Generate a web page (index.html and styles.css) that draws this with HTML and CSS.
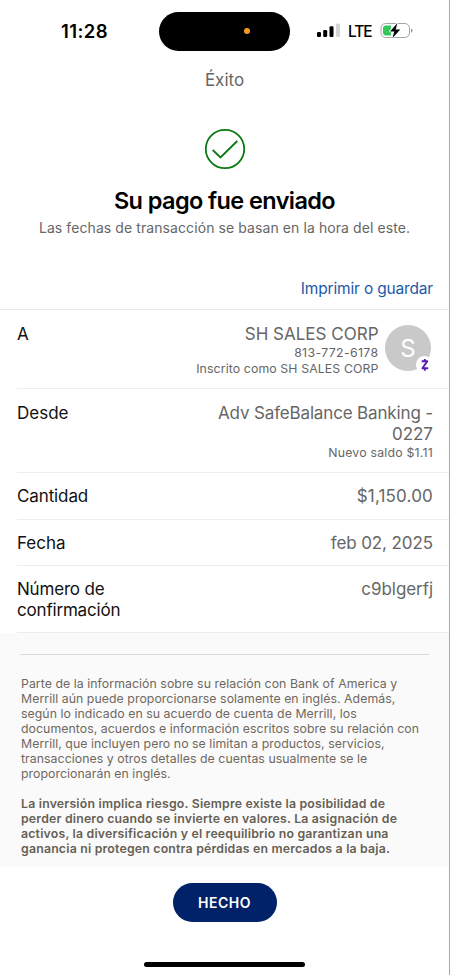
FILE: index.html
```html
<!DOCTYPE html>
<html lang="es">
<head>
<meta charset="utf-8">
<title>Éxito</title>
<link rel="stylesheet" href="styles.css">
</head>
<body>
<div class="screen">
  <header class="status">
    <span class="time">11:28</span>
    <div class="island"><i class="dot"></i></div>
    <div class="indicators">
      <svg class="signal" width="24" height="16" viewBox="0 0 24 16">
        <rect x="0" y="9" width="4" height="5" rx="1.2"/>
        <rect x="6.2" y="7" width="4" height="7" rx="1.2"/>
        <rect x="12.5" y="3.2" width="4" height="10.8" rx="1.2"/>
        <rect x="19" y="0.5" width="4" height="13.5" rx="1.2" fill="#d4d4d4"/>
      </svg>
      <span class="lte">LTE</span>
      <svg class="battery" width="34" height="18" viewBox="0 0 34 18">
        <rect x="1" y="1.500" width="28.5" height="14" rx="4.6" fill="#fff" stroke="#a5a5a5"/>
        <path d="M6 3.500H11V13.500H6Q3 13.500 3 10.500V6.500Q3 3.500 6 3.500Z" fill="#34c759"/>
        <path d="M31 6.500V10.700Q32.600 10.100 32.600 8.600T31 6.500Z" fill="#999"/>
        <path d="M17.500 1L10 9.400H14.400L12.300 16.300L20.300 7.600H15.600Z" fill="#000" stroke="#fff" stroke-width="1.600" paint-order="stroke" stroke-linejoin="round"/>
      </svg>
    </div>
  </header>
  <h1 class="page-title">Éxito</h1>
  <svg class="check" width="42" height="42" viewBox="0 0 42 42" fill="none" stroke="#0b7a12">
    <circle cx="21" cy="21" r="19.200" stroke-width="1.800"/>
    <path d="M8.700 22L16.500 29.500L33.300 13" stroke-width="1.900"/>
  </svg>
  <h2 class="headline">Su pago fue enviado</h2>
  <p class="note">Las fechas de transacción se basan en la hora del este.</p>
  <a class="save">Imprimir o guardar</a>
  <main class="details">
    <section class="row row-to">
      <span class="label">A</span>
      <div class="value">
        <span class="payee">SH SALES CORP</span>
        <small class="phone">813-772-6178</small>
        <small class="enrolled">Inscrito como SH SALES CORP</small>
      </div>
      <div class="avatar">S
        <span class="badge"><svg width="10" height="14" viewBox="0 0 10 14" fill="none" stroke="#5b18b5" stroke-width="1.900"><path d="M1.700 3.200H7.300L2.400 10.300H8.200M4.800 .9V3.200M4.800 10.300V12.800" stroke-linejoin="round"/></svg></span>
      </div>
    </section>
    <section class="row row-from">
      <span class="label desde">Desde</span>
      <div class="value"><span class="account">Adv SafeBalance Banking -</span><span class="digits">0227</span><small class="balance">Nuevo saldo $1.11</small></div>
    </section>
    <section class="row row-amount"><span class="label cantidad">Cantidad</span><div class="value"><span class="amount">$1,150.00</span></div></section>
    <section class="row row-date"><span class="label fecha">Fecha</span><div class="value"><span class="date">feb 02, 2025</span></div></section>
    <section class="row row-number"><span class="label numero">Número de<br>confirmación</span><div class="value"><span class="code">c9blgerfj</span></div></section>
  </main>
  <section class="legal">
    <p>Parte de la información sobre su relación con Bank of America y<br>Merrill aún puede proporcionarse solamente en inglés. Además,<br>según lo indicado en su acuerdo de cuenta de Merrill, los<br>documentos, acuerdos e información escritos sobre su relación con<br>Merrill, que incluyen pero no se limitan a productos, servicios,<br>transacciones y otros detalles de cuentas usualmente se le<br>proporcionarán en inglés.</p>
    <p class="risk">La inversión implica riesgo. Siempre existe la posibilidad de<br>perder dinero cuando se invierte en valores. La asignación de<br>activos, la diversificación y el reequilibrio no garantizan una<br>ganancia ni protegen contra pérdidas en mercados a la baja.</p>
  </section>
  <footer class="footer">
    <button class="done">HECHO</button>
    <div class="home"></div>
  </footer>
</div>
</body>
</html>
```
FILE: styles.css
```css
* { box-sizing: border-box; }
body { margin: 0; background: #fff; font-family: Inter, "Liberation Sans", sans-serif; color: #111; }
.screen { width: 450px; height: 975px; display: flex; flex-direction: column; align-items: center; border-right: 1px solid #a9a9a9; overflow: hidden; }
.status { width: 100%; height: 62px; flex: none; display: grid; grid-template-columns: 159px 131px 1fr; align-items: center; }
.time { padding-left: 61px; font-size: 18.500px; font-weight: 600; letter-spacing: .4px; color: #000; }
.island { height: 39px; border-radius: 20px; background: #000; display: flex; align-items: center; padding-left: 85px; }
.dot { width: 6px; height: 6px; border-radius: 50%; background: #f59a23; }
.indicators { display: flex; align-items: center; padding-left: 27px; }
.lte { margin-left: 7px; width: 32px; font-size: 15.500px; font-weight: 500; letter-spacing: -1.100px; color: #000; }
.page-title { margin: 8px 0 0; font-size: 17px; line-height: 20px; font-weight: 400; color: #666; }
.check { margin-top: 38px; flex: none; }
.headline { margin: 16px 0 0; font-size: 23.500px; line-height: 30px; font-weight: 600; letter-spacing: -.6px; color: #000; white-space: nowrap; }
.note { margin: 2px 0 0; font-size: 14px; line-height: 20px; letter-spacing: .085px; color: #666; white-space: nowrap; }
.save { align-self: flex-end; margin: 41px 16px 10px 0; font-size: 15.500px; line-height: 20px; letter-spacing: -.17px; color: #1c5aa6; white-space: nowrap; }
.details { width: 100%; border-top: 1px solid #e8e8e8; padding-left: 17px; flex: none; }
.row { display: flex; justify-content: space-between; border-bottom: 1px solid #ececec; padding: 13px 16px 0 0; font-size: 17px; line-height: 21px; white-space: nowrap; }
.value { display: flex; flex-direction: column; align-items: flex-end; color: #666; }
.value small { font-size: 12.300px; line-height: 16px; }
.value .phone { letter-spacing: .37px; }
.value .enrolled { letter-spacing: .11px; }
.value .balance { letter-spacing: .22px; }
.account { letter-spacing: -.15px; }
.amount { letter-spacing: .17px; }
.date { letter-spacing: -.1px; }
.cantidad { letter-spacing: -.12px; }
.numero { letter-spacing: -.19px; }
.code { letter-spacing: -.06px; }
.row-to { height: 79px; padding-top: 14px; padding-right: 18px; }
.row-to .value { margin-left: auto; margin-right: 6.500px; }
.row-from { height: 84px; padding-top: 14px; }
.row-amount { height: 47px; }
.row-date { height: 46px; }
.row-number { height: 67px; }
.avatar { position: relative; width: 46px; height: 46px; margin-top: 1px; border-radius: 50%; background: #c9c9c9; color: #fff; font-size: 24px; line-height: 47px; text-align: center; }
.badge { position: absolute; left: 31px; top: 31px; width: 17px; height: 17px; border-radius: 50%; background: #fff; display: flex; align-items: center; justify-content: center; }
.legal { width: 100%; height: 233px; flex: none; background: #fafafa; padding: 21px 20px 0; }
.legal p { margin: 0; font-size: 12.300px; line-height: 14.930px; letter-spacing: .055px; color: #6f685f; white-space: nowrap; padding-left: 1px; }
.legal p:first-child { border-top: 1px solid #d9d9d9; padding-top: 22px; }
.legal .risk { margin-top: 15.500px; font-weight: 600; letter-spacing: .2px; color: #665f55; }
.footer { width: 100%; flex: 1; display: flex; flex-direction: column; align-items: center; }
.done { width: 104px; height: 39px; margin-top: 17px; border: 0; border-radius: 20px; background: #012169; color: #fff; font: 600 14px Inter, sans-serif; letter-spacing: .5px; }
.home { width: 161px; height: 5px; margin-top: 40px; border-radius: 3px; background: #000; }
```
